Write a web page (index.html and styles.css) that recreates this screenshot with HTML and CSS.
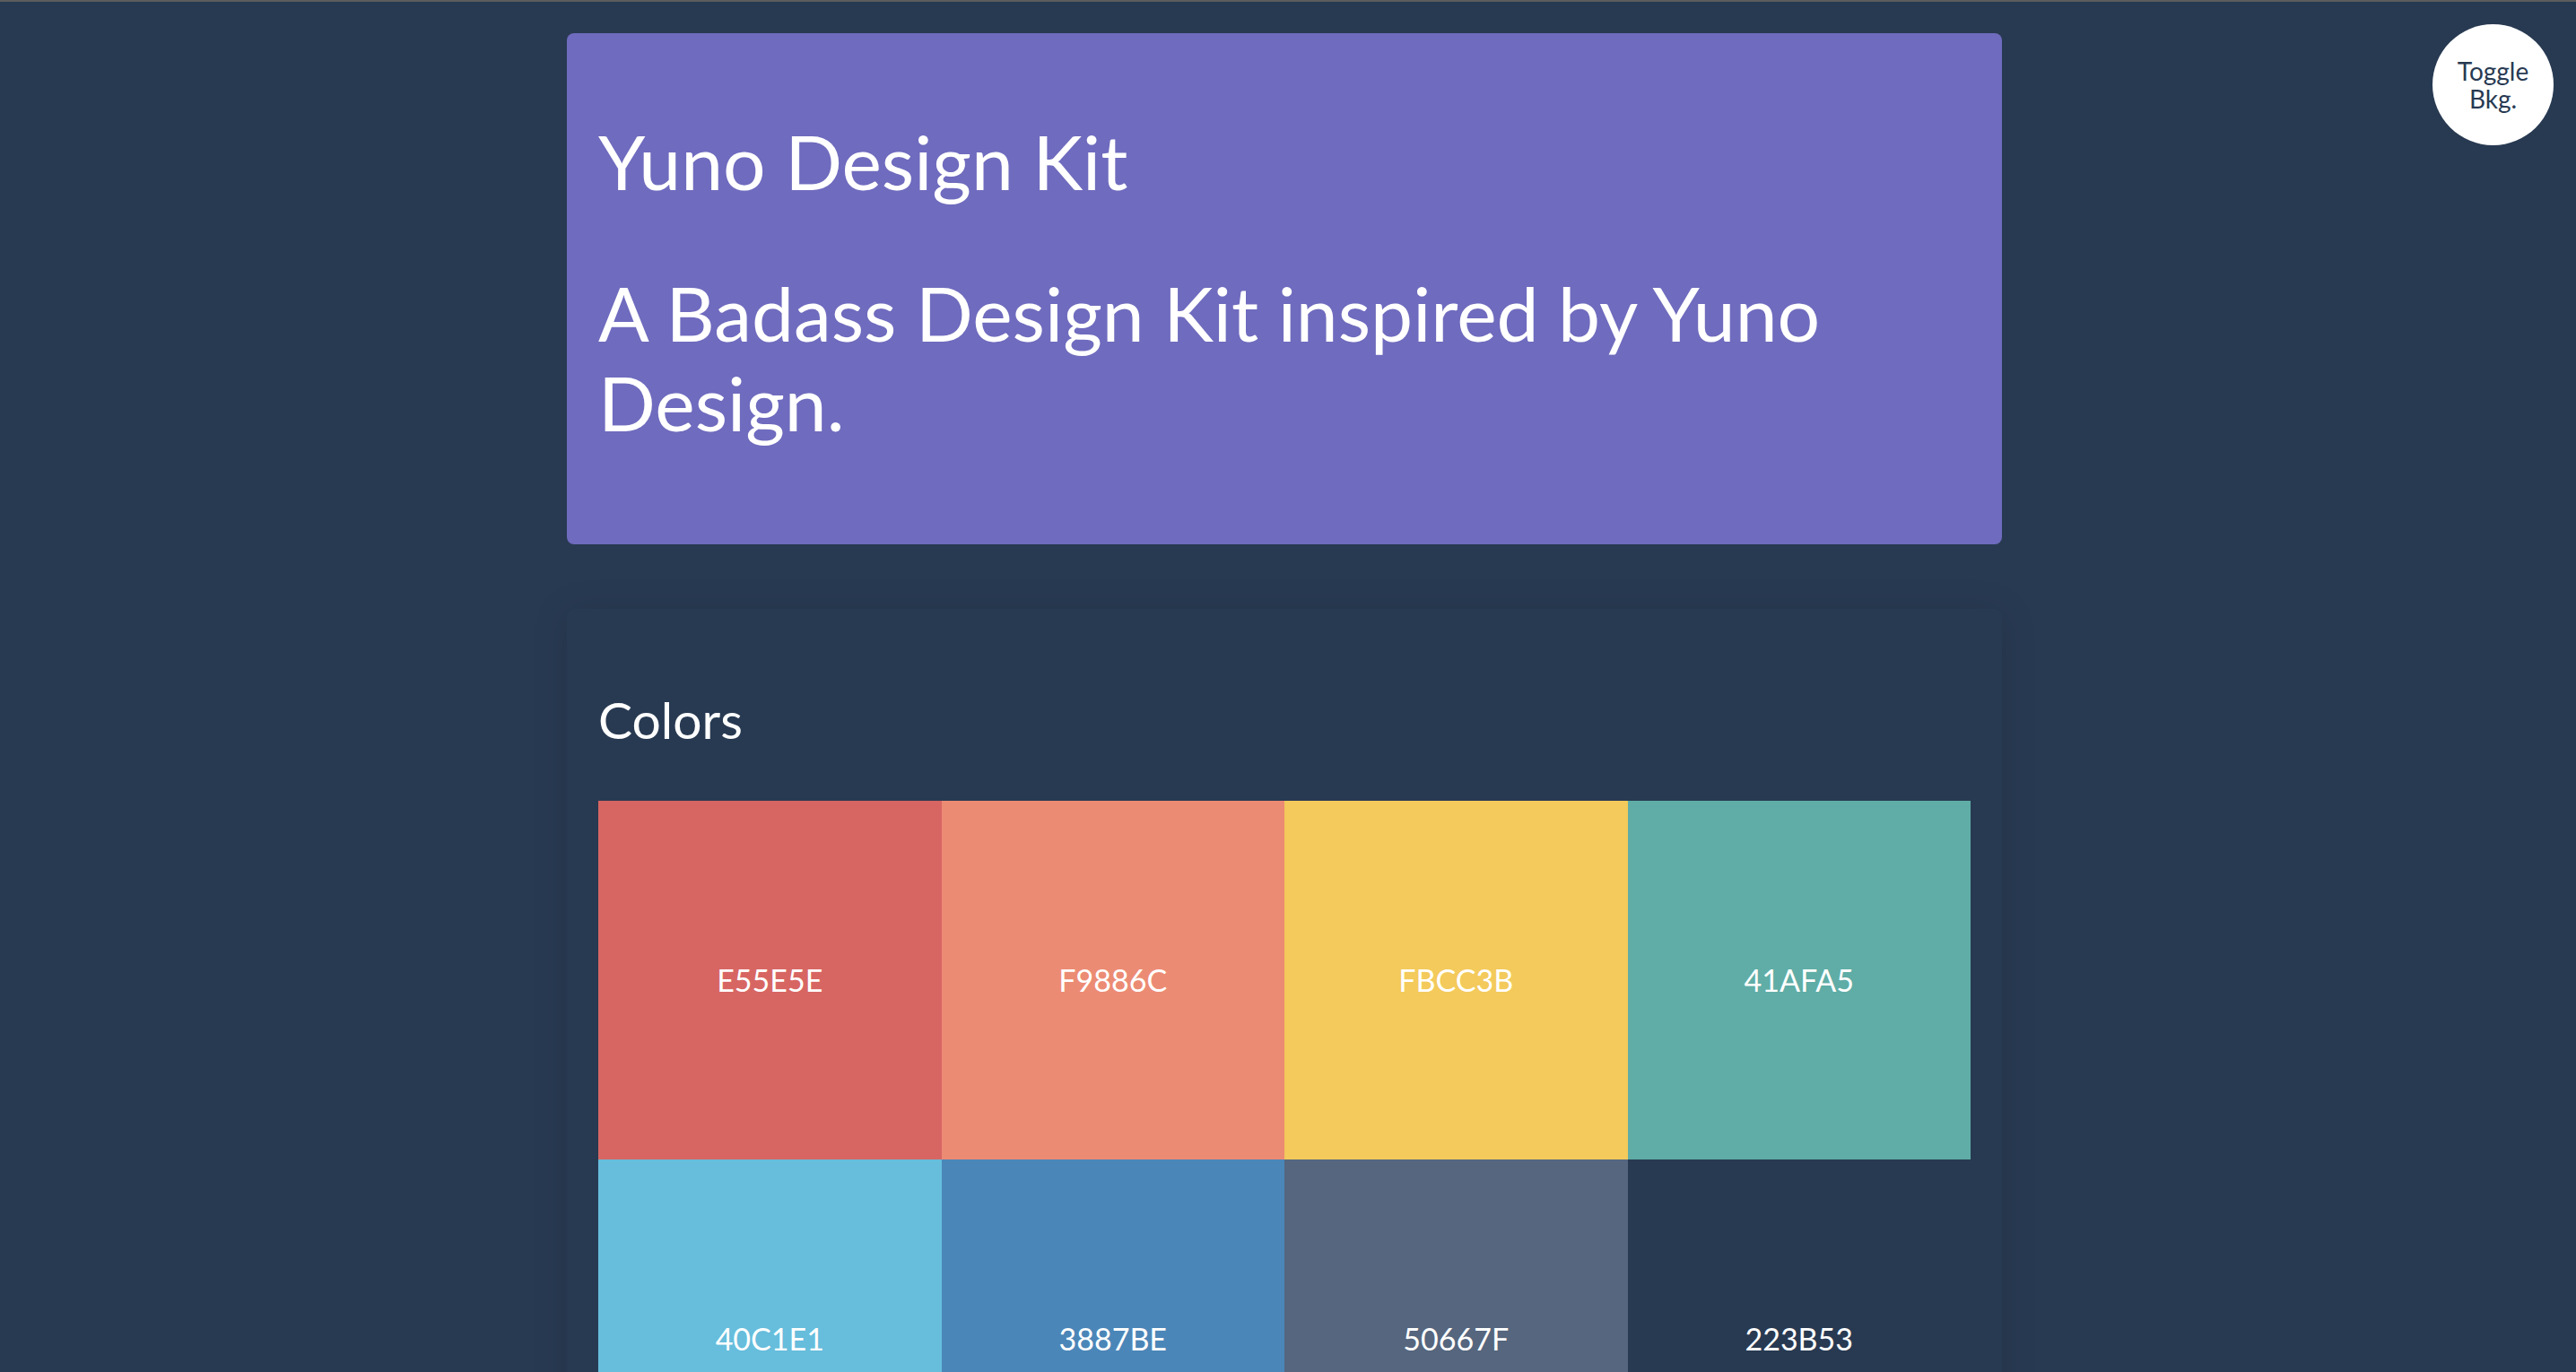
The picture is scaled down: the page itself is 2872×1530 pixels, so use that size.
FILE: index.html
```html
<!DOCTYPE html>
<html lang="en">
<head>
<meta charset="utf-8">
<title>Yuno Design Kit</title>
<link rel="stylesheet" href="styles.css">
</head>
<body>
  <button class="toggle" type="button">Toggle<br>Bkg.</button>
  <main class="container">
    <header class="hero">
      <h1 class="hero-title">Yuno Design Kit</h1>
      <h2 class="hero-subtitle">A Badass Design Kit inspired by Yuno Design.</h2>
    </header>
    <section class="panel">
      <h3 class="panel-title">Colors</h3>
      <div class="swatches">
        <div class="swatch swatch-red">E55E5E</div>
        <div class="swatch swatch-salmon">F9886C</div>
        <div class="swatch swatch-yellow">FBCC3B</div>
        <div class="swatch swatch-teal">41AFA5</div>
        <div class="swatch swatch-sky">40C1E1</div>
        <div class="swatch swatch-blue">3887BE</div>
        <div class="swatch swatch-slate">50667F</div>
        <div class="swatch swatch-navy">223B53</div>
      </div>
    </section>
  </main>
</body>
</html>
```
FILE: styles.css
```css
html {
  background: #283a52;
  border-top: 2px solid #5c5c5c;
}

body {
  margin: 0;
  padding: 35px 8px 0 0;
  font-family: Lato, "Open Sans", sans-serif;
  color: #ffffff;
}

.container {
  width: 1600px;
  margin: 0 auto;
}

.hero {
  background: #6f6bbe;
  border-radius: 8px;
  padding: 93px 35px 108px;
}

.hero-title,
.hero-subtitle {
  margin: 0;
  font-weight: 400;
  font-size: 84px;
  line-height: 100px;
}

.hero-subtitle {
  margin-top: 69px;
}

.panel {
  margin-top: 72px;
  background: #283a52;
  border-radius: 8px;
  box-shadow: 0 4px 40px rgba(0, 0, 0, 0.13);
  padding: 90px 35px 35px;
}

.panel-title {
  margin: 0 0 57px;
  font-weight: 400;
  font-size: 57px;
  line-height: 67px;
}

.swatches {
  display: grid;
  grid-template-columns: repeat(4, 1fr);
  grid-auto-rows: 400px;
}

.swatch {
  display: flex;
  align-items: center;
  justify-content: center;
  padding-bottom: 2px;
  font-size: 34px;
  color: #ffffff;
}

.swatch-red { background: #d76663; }
.swatch-salmon { background: #ec8b74; }
.swatch-yellow { background: #f3ca5b; }
.swatch-teal { background: #5fada6; }
.swatch-sky { background: #66bddc; }
.swatch-blue { background: #4b86b8; }
.swatch-slate { background: #55667e; }
.swatch-navy { background: #283a52; }

.toggle {
  position: fixed;
  top: 27px;
  right: 25px;
  width: 135px;
  height: 135px;
  border: none;
  border-radius: 50%;
  background: #ffffff;
  color: #283a52;
  font-family: Lato, "Open Sans", sans-serif;
  font-size: 28px;
  line-height: 31px;
  padding: 0;
  cursor: pointer;
}
```
